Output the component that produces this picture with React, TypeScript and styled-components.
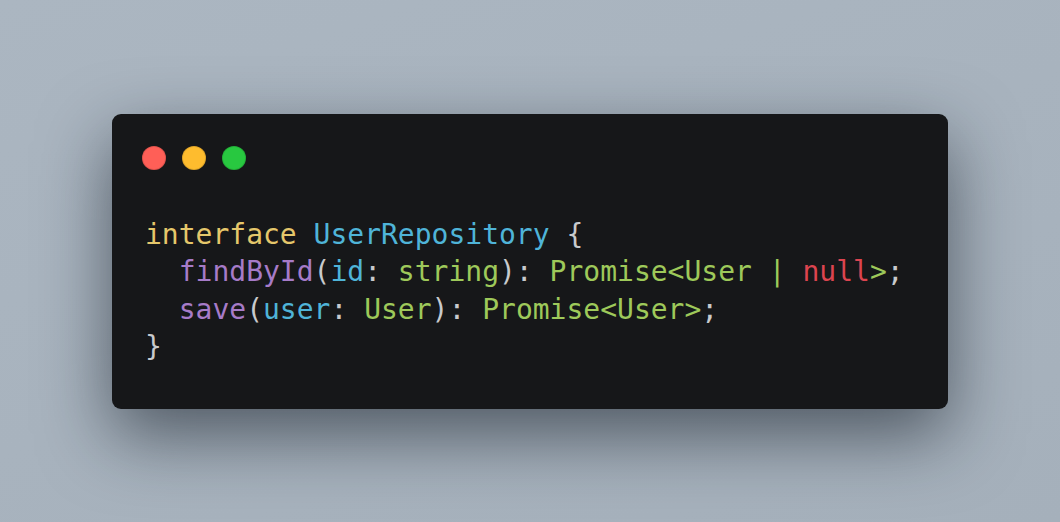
import React from "react";
import styled, { createGlobalStyle } from "styled-components";

const Global = createGlobalStyle`
  html, body { margin: 0; padding: 0; }
  body { background: #a9b4bf; }
`;

const Page = styled.div`
  width: 1060px;
  height: 522px;
  display: flex;
  align-items: center;
  justify-content: center;
  background: linear-gradient(160deg, #abb6c1 0%, #a5b0bb 100%);
`;

const Window = styled.div`
  width: 836px;
  box-sizing: border-box;
  background: #161719;
  border-radius: 9px;
  padding: 32px 30px 43px 30px;
  box-shadow: 0 26px 70px rgba(20, 28, 38, 0.6);
  display: flex;
  flex-direction: column;
  gap: 46px;
`;

const Dots = styled.div`
  display: flex;
  gap: 16px;
`;

const Dot = styled.span<{ $c: string }>`
  width: 24px;
  height: 24px;
  border-radius: 50%;
  background: ${(p) => p.$c};
  box-shadow: inset 0 0 0 1px rgba(0, 0, 0, 0.12);
`;

const Code = styled.pre`
  margin: 0;
  padding-left: 3px;
  font-family: "DejaVu Sans Mono", "Liberation Mono", monospace;
  font-size: 28px;
  line-height: 37.5px;
  color: #c8cacd;
`;

const Line = styled.div<{ $indent?: number }>`
  white-space: pre;
  padding-left: ${(p) => (p.$indent ?? 0) * 2}ch;
`;

const T = styled.span<{ $k: "kw" | "type" | "fn" | "param" | "str" | "null" | "punc" }>`
  color: ${(p) =>
    ({
      kw: "#e5c76b",
      type: "#4fb4d8",
      fn: "#a67bc8",
      param: "#4fb4d8",
      str: "#9ec95a",
      null: "#dc444f",
      punc: "#c8cacd",
    })[p.$k]};
`;

export default function App() {
  return (
    <>
      <Global />
      <Page>
        <Window>
          <Dots>
            <Dot $c="#ff5f57" />
            <Dot $c="#febc2e" />
            <Dot $c="#28c840" />
          </Dots>
          <Code>
            <Line>
              <T $k="kw">interface</T> <T $k="type">UserRepository</T> <T $k="punc">{"{"}</T>
            </Line>
            <Line $indent={1}>
              <T $k="fn">findById</T>
              <T $k="punc">(</T>
              <T $k="param">id</T>
              <T $k="punc">: </T>
              <T $k="str">string</T>
              <T $k="punc">): </T>
              <T $k="str">Promise&lt;User | </T>
              <T $k="null">null</T>
              <T $k="str">&gt;</T>
              <T $k="punc">;</T>
            </Line>
            <Line $indent={1}>
              <T $k="fn">save</T>
              <T $k="punc">(</T>
              <T $k="param">user</T>
              <T $k="punc">: </T>
              <T $k="str">User</T>
              <T $k="punc">): </T>
              <T $k="str">Promise&lt;User&gt;</T>
              <T $k="punc">;</T>
            </Line>
            <Line>
              <T $k="punc">{"}"}</T>
            </Line>
          </Code>
        </Window>
      </Page>
    </>
  );
}
